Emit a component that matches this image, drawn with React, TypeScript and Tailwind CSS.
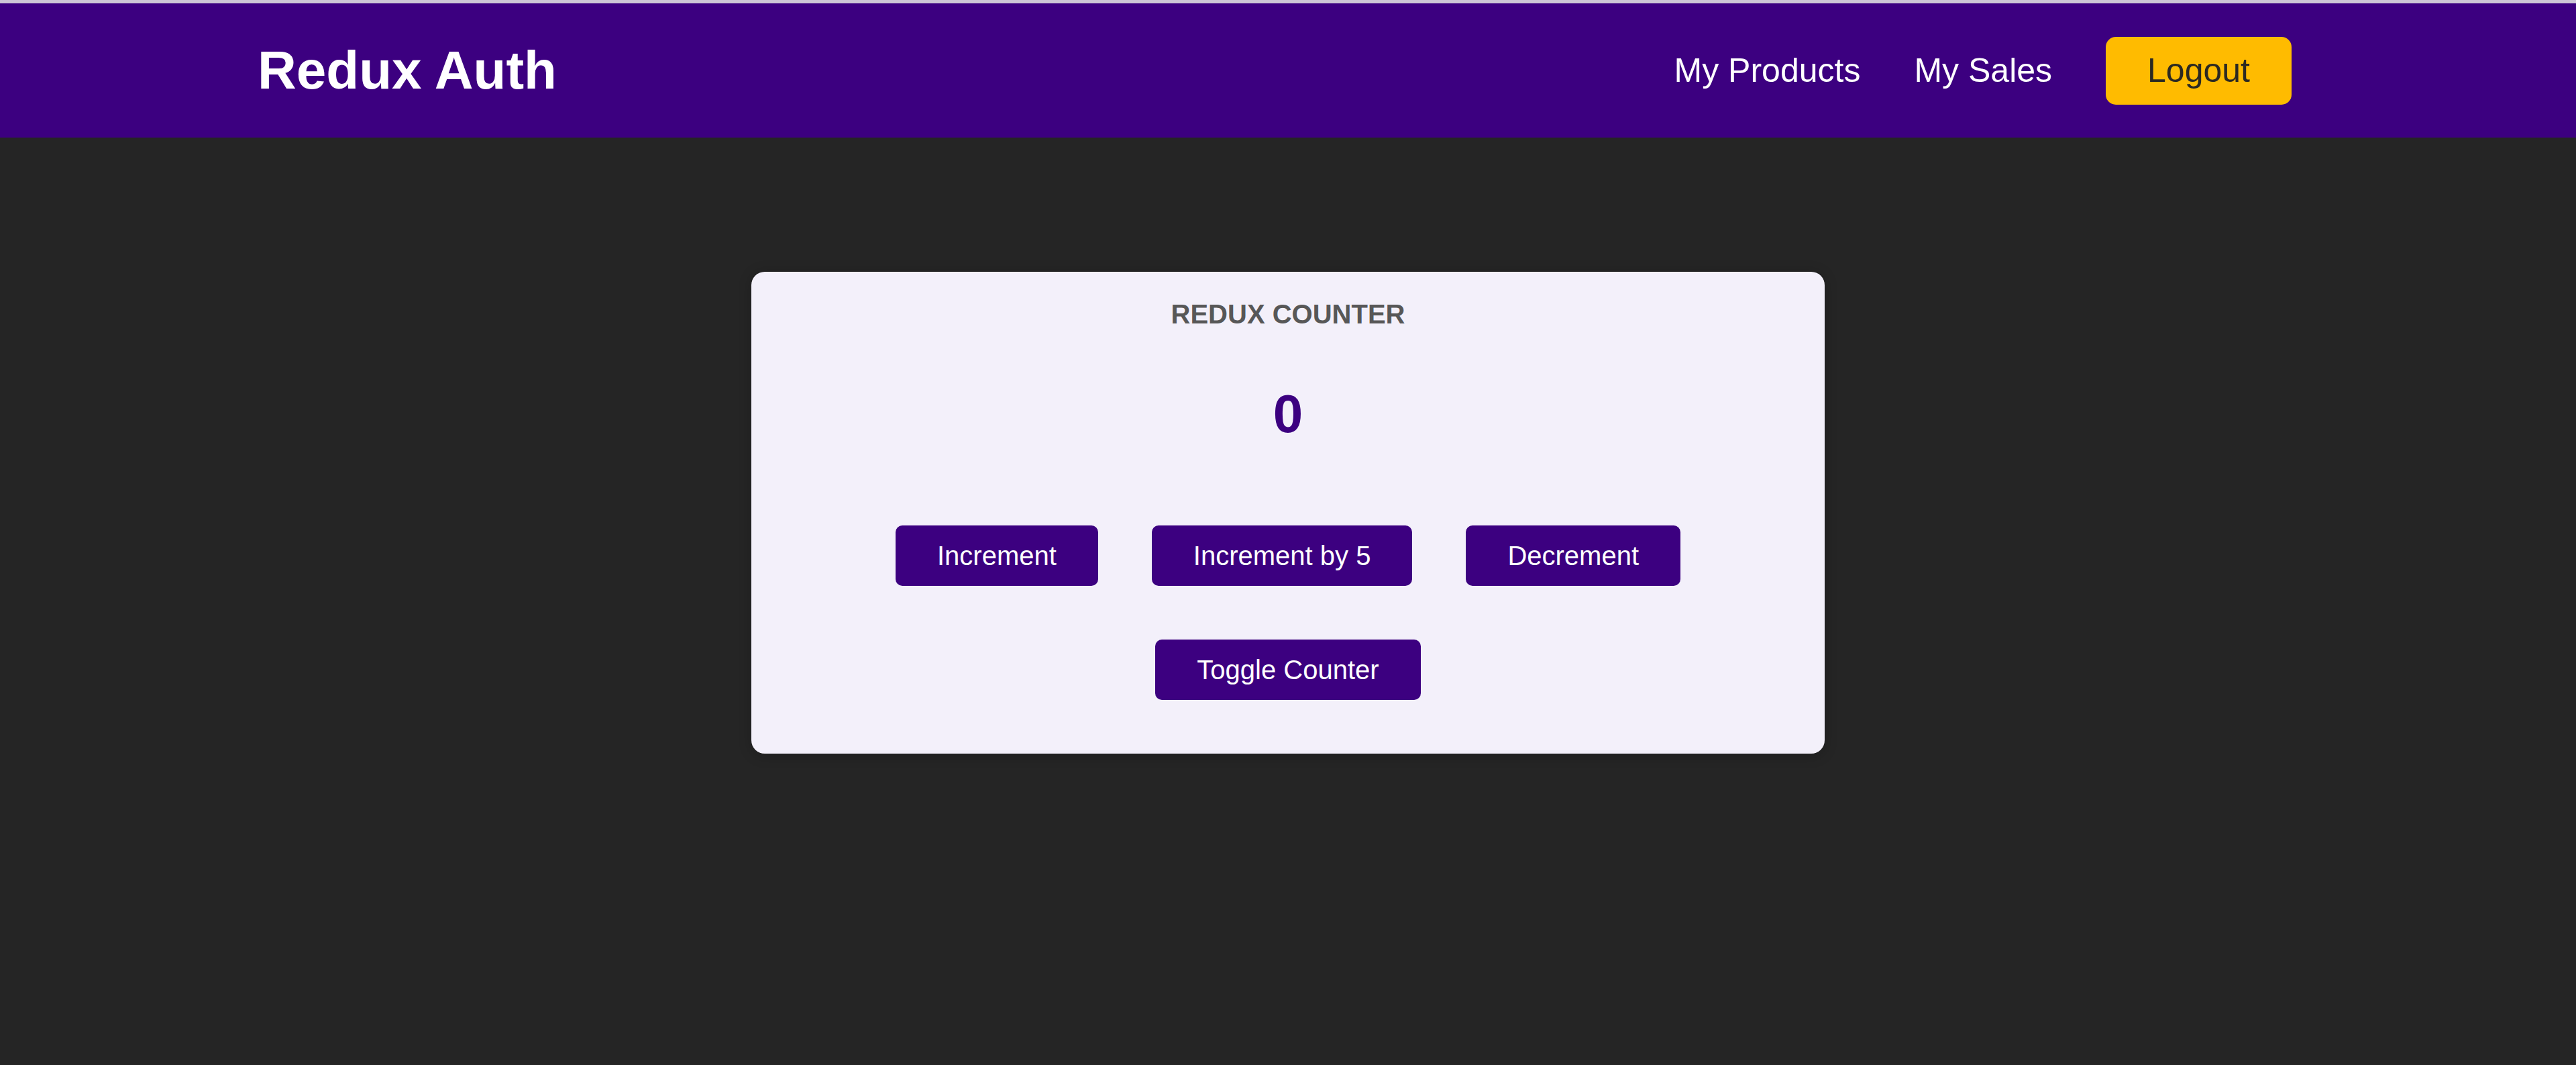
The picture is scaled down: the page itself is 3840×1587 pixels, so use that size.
import { useState } from "react";

const btn =
  "m-[40px] rounded-[10px] border-[2.5px] border-[#3c0080] bg-[#3c0080] px-[60px] py-[20px] text-[40px] leading-[46px] text-white";

export default function App() {
  const [counter, setCounter] = useState(0);
  const [show, setShow] = useState(true);

  return (
    <div className="min-h-[1587px] bg-[#252525] font-['Liberation_Sans',Arial,sans-serif]">
      <div className="h-[5px] bg-[#cdc6d6]" />
      <header className="flex h-[200px] items-center justify-between bg-[#3c0080] px-[384px]">
        <h1 className="text-[80px] font-bold leading-none text-white">Redux Auth</h1>
        <nav>
          <ul className="flex items-center">
            <li className="mx-[40px]">
              <a className="text-[50px] text-white">My Products</a>
            </li>
            <li className="mx-[40px]">
              <a className="text-[50px] text-white">My Sales</a>
            </li>
            <li className="mx-[40px]">
              <button className="rounded-[15px] border-[2.5px] border-[#ffbb00] bg-[#ffbb00] px-[60px] py-[20px] text-[50px] leading-[57px] text-[#2c2922]">
                Logout
              </button>
            </li>
          </ul>
        </nav>
      </header>
      <main className="pt-[200px]">
        <div className="mx-auto w-[1600px] rounded-[20px] bg-[#f3f0fa] p-[40px] text-center shadow-[0_2.5px_20px_rgba(0,0,0,0.2)]">
          <h1 className="text-[40px] font-bold uppercase leading-[46px] text-[#575757]">Redux Counter</h1>
          <div className="my-[80px] text-[80px] font-bold leading-[92px] text-[#3c0080]">{show ? counter : ""}</div>
          <div className="flex justify-center">
            <button className={btn} onClick={() => setCounter(counter + 1)}>
              Increment
            </button>
            <button className={btn} onClick={() => setCounter(counter + 5)}>
              Increment by 5
            </button>
            <button className={btn} onClick={() => setCounter(counter - 1)}>
              Decrement
            </button>
          </div>
          <div className="flex justify-center">
            <button className={btn} onClick={() => setShow(!show)}>
              Toggle Counter
            </button>
          </div>
        </div>
      </main>
    </div>
  );
}
